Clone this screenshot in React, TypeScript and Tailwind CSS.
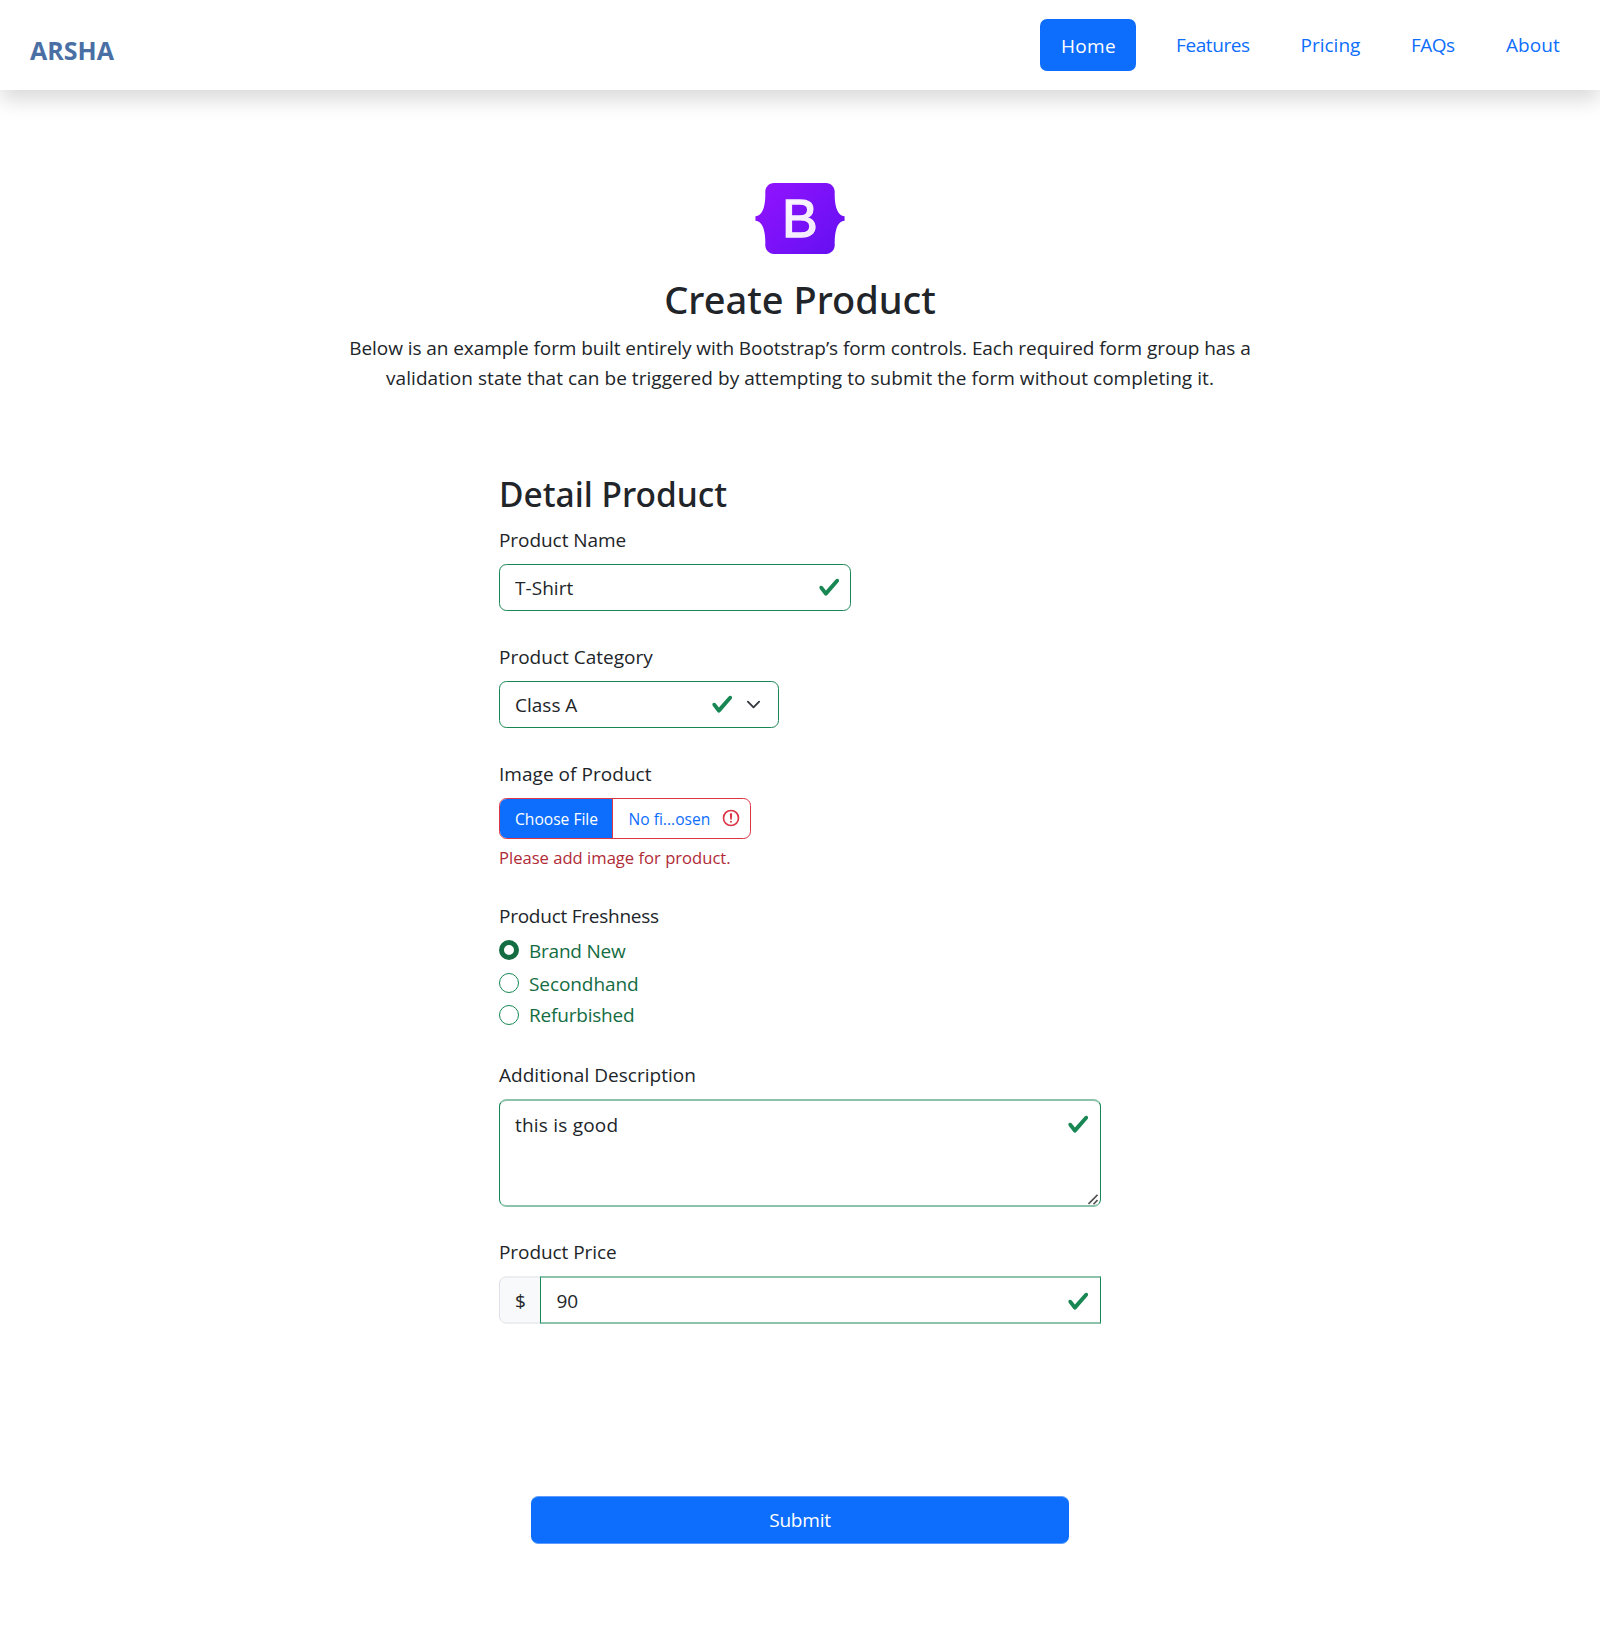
import React from 'react';

function Check({ className = '' }: { className?: string }) {
  return (
    <svg viewBox="0 0 8 8" className={`pointer-events-none absolute h-[22.5px] w-[22.5px] ${className}`}>
      <path
        fill="#198754"
        d="M2.3 6.73.6 4.53c-.4-1.04.46-1.4 1.1-.8l1.1 1.4 3.4-3.8c.6-.63 1.6-.27 1.2.7l-4 4.6c-.43.5-.8.4-1.1.1z"
      />
    </svg>
  );
}

function Logo() {
  return (
    <svg viewBox="0 0 118 94" className="mx-auto h-[71px] w-[90px]">
      <defs>
        <linearGradient id="shell" x1="14" y1="0" x2="104" y2="94" gradientUnits="userSpaceOnUse">
          <stop stopColor="#9013fe" />
          <stop offset="1" stopColor="#6610f2" />
        </linearGradient>
        <linearGradient id="letter" x1="0" y1="0" x2="0.6" y2="1">
          <stop stopColor="#ffffff" />
          <stop offset="1" stopColor="#f1e5fc" />
        </linearGradient>
      </defs>
      <path
        fill="url(#shell)"
        d="M24.509 0c-6.733 0-11.715 5.893-11.492 12.284.214 6.14-.064 14.092-2.066 20.577C8.943 39.365 5.547 43.485 0 44.014v5.972c5.547.529 8.943 4.649 10.951 11.153 2.002 6.485 2.28 14.437 2.066 20.577C12.794 88.106 17.776 94 24.51 94H93.5c6.733 0 11.714-5.893 11.491-12.284-.214-6.14.064-14.092 2.066-20.577 2.009-6.504 5.396-10.624 10.943-11.153v-5.972c-5.547-.529-8.934-4.649-10.943-11.153-2.002-6.484-2.28-14.437-2.066-20.577C105.214 5.894 100.233 0 93.5 0H24.508z"
      />
      <text
        x="59"
        y="71.6"
        textAnchor="middle"
        fill="url(#letter)"
        className="font-['Liberation_Sans',sans-serif] text-[71px]"
        stroke="#f7effe"
        strokeWidth="1.8"
      >
        B
      </text>
    </svg>
  );
}

function Label({ children, className = '' }: { children: React.ReactNode; className?: string }) {
  return <div className={`h-[30px] leading-[30px] whitespace-nowrap ${className}`}>{children}</div>;
}

function Radio({
  label,
  checked = false,
  className = '',
  textClass = 'leading-[30px]',
}: {
  label: string;
  checked?: boolean;
  className?: string;
  textClass?: string;
}) {
  return (
    <div className={`flex items-start text-[#146c43] ${className}`}>
      <span
        className={`mt-1 h-5 w-5 shrink-0 rounded-full ${checked ? 'border-[5.5px] border-[#146c43] bg-white' : 'border border-[#198754] bg-white'}`}
      />
      <span className={`ml-[10px] ${textClass}`}>{label}</span>
    </div>
  );
}

export default function App() {
  return (
    <div className="flex h-[1625px] w-[1600px] flex-col bg-white font-['Open_Sans',sans-serif] text-[19px] text-[#212529]">
      <header className="flex h-[90px] shrink-0 items-start bg-white shadow-[0_10px_20px_rgba(0,0,0,0.15)]">
        <div className="mt-[31px] ml-[30px] text-[25px] leading-[38px] font-bold text-[#4a6fa5]">ARSHA</div>
        <nav className="mt-[19px] ml-auto flex leading-[52px] text-[#0d6efd]">
          <a className="mr-[40px] h-[52px] w-[96px] rounded-[7px] bg-[#0d6efd] pl-[21px] leading-[54px] tracking-[0.3px] text-white">Home</a>
          <a className="w-[124.5px] tracking-[-0.41px]">Features</a>
          <a className="w-[110.5px]">Pricing</a>
          <a className="w-[95px] tracking-[-0.5px]">FAQs</a>
          <a className="w-[94px] tracking-[0.07px]">About</a>
        </nav>
      </header>

      <section className="mt-[93px] text-center">
        <Logo />
        <h1 className="mt-[21px] font-['Noto_Sans',sans-serif] text-[38px] leading-[48px] font-medium">Create Product</h1>
        <p className="mt-[10px] leading-[30px]">
          <span className="tracking-[-0.07px]">
            Below is an example form built entirely with Bootstrap’s form controls. Each required form group has a
          </span>
          <br />
          <span className="tracking-[0.05px]">
            validation state that can be triggered by attempting to submit the form without completing it.
          </span>
        </p>
      </section>

      <form className="mt-[80px] ml-[499px] flex w-[602px] flex-col">
        <h2 className="font-['Noto_Sans',sans-serif] text-[33.5px] leading-[42px] font-medium">Detail Product</h2>

        <Label className="mt-[10px] tracking-[-0.06px]">Product Name</Label>
        <div className="relative mt-[9px] h-[47px] w-[352px]">
          <input
            defaultValue="T-Shirt"
            className="h-full w-full rounded-[7.5px] border border-[#198754] bg-white px-[15px] tracking-[0.05px] outline-none"
          />
          <Check className="top-[12px] right-[11px]" />
        </div>

        <Label className="mt-[31px]">Product Category</Label>
        <div className="relative mt-[9px] h-[47px] w-[280px] rounded-[7.5px] border border-[#198754] bg-white px-[15px] leading-[46px]">
          Class A
          <Check className="top-[11px] right-[45px]" />
          <svg viewBox="0 0 16 16" className="absolute top-[14.5px] right-[17px] h-[15px] w-[15px]" fill="none">
            <path d="m2 5 6 6 6-6" stroke="#343a40" strokeWidth="2" strokeLinecap="round" strokeLinejoin="round" />
          </svg>
        </div>

        <Label className="mt-[31px] tracking-[0.04px]">Image of Product</Label>
        <div className="relative mt-[9px] flex h-[41px] w-[252px] overflow-hidden rounded-[7.5px] border border-[#dc3545] bg-white text-[15.6px] leading-[41px] text-[#0d6efd]">
          <span className="w-[113px] border-r border-[#dc3545] bg-[#0d6efd] pl-[15px] whitespace-nowrap text-white">Choose File</span>
          <span className="pl-[15.5px] whitespace-nowrap">No fi...osen</span>
          <svg viewBox="0 0 12 12" className="absolute top-[9px] right-[9px] h-5 w-5" fill="none" stroke="#dc3545">
            <circle cx="6" cy="6" r="4.5" />
            <path strokeLinejoin="round" d="M5.8 3.6h.4L6 6.5z" />
            <circle cx="6" cy="8.2" r=".6" fill="#dc3545" stroke="none" />
          </svg>
        </div>
        <div className="mt-[6px] h-[26px] text-[16.6px] leading-[26px] text-[#b02a37]">Please add image for product.</div>

        <Label className="mt-[30px] tracking-[-0.25px]">Product Freshness</Label>
        <Radio label="Brand New" checked className="mt-[5px] h-[33px] tracking-[-0.22px]" />
        <Radio label="Secondhand" className="h-[32px] tracking-[-0.08px]" />
        <Radio label="Refurbished" className="h-[30px] tracking-[-0.2px]" textClass="leading-[28px]" />

        <Label className="mt-[29px] tracking-[0.02px]">Additional Description</Label>
        <div className="relative mt-[9px] h-[108px]">
          <textarea
            defaultValue="this is good"
            className="block h-full w-full resize-none rounded-[7.5px] border-x border-y-2 border-x-[#198754] border-y-[#8cc3aa] bg-white px-[15px] pt-[9px] leading-[30px] tracking-[0.21px] outline-none"
          />
          <Check className="top-[14px] right-[12px]" />
          <svg viewBox="0 0 10 11" className="absolute right-[3px] bottom-[2px] h-[11px] w-[10px]" fill="none" stroke="#505050" strokeWidth="1.6">
            <path d="M.5 10 9.5.8M5.5 10.2 9.5 6" />
          </svg>
        </div>

        <Label className="mt-[30px] tracking-[-0.07px]">Product Price</Label>
        <div className="relative mt-[9px] flex h-[48px]">
          <span className="w-[41px] rounded-l-[7.5px] border-y-2 border-l border-y-[#eceef1] border-l-[#dee2e6] bg-[#f8f9fa] pl-[15px] leading-[46px]">$</span>
          <input
            defaultValue="90"
            className="h-full w-[561px] border-x border-y-2 border-x-[#198754] border-y-[#8cc3aa] bg-white px-[15.5px] pt-[2px] outline-none"
          />
          <Check className="top-[14px] right-[12px]" />
        </div>
      </form>

      <button className="mt-[172px] ml-[531px] h-[48px] w-[538px] rounded-[7.5px] border-y border-y-[#5c9dfe] bg-[#0d6efd] leading-[46px] tracking-[-0.2px] text-white">
        Submit
      </button>
    </div>
  );
}
